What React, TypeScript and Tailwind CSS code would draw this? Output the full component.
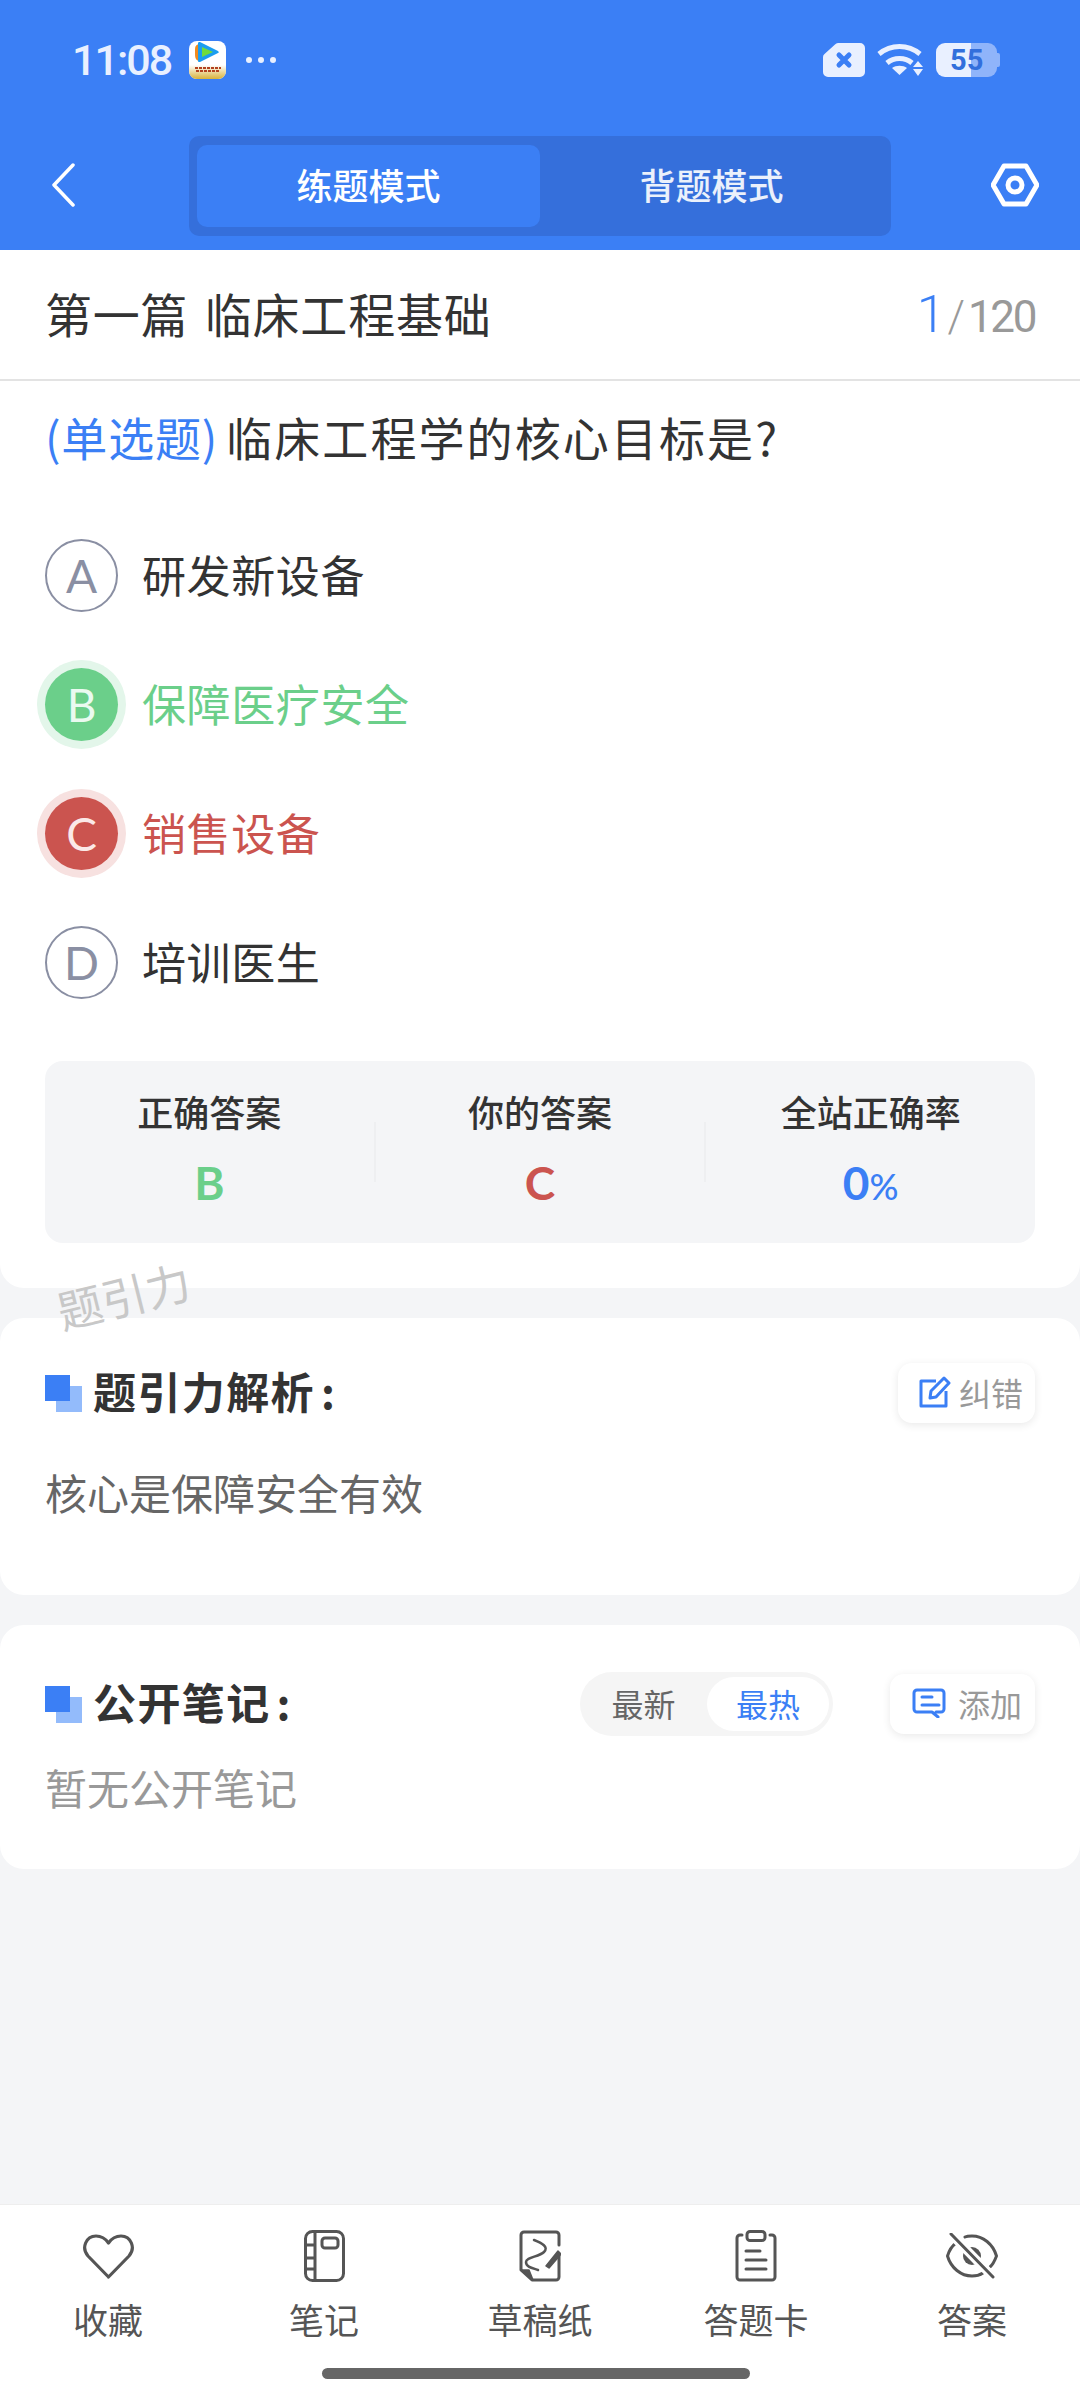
import type { ReactNode } from "react";

const FONT = "font-['Noto_Sans_CJK_SC','Noto_Sans',sans-serif]";

function HexIcon() {
  return (
    <svg width="48" height="44" viewBox="0 0 48 44" fill="none" stroke="white" strokeWidth="5" strokeLinejoin="round">
      <path d="M13 3h22l11 19-11 19H13L2 22z" />
      <circle cx="24" cy="22" r="7" />
    </svg>
  );
}

function AppIcon() {
  return (
    <svg width="37" height="38" viewBox="0 0 37 38" className="rounded-[8px]">
      <defs>
        <linearGradient id="band" x1="0" y1="0" x2="0" y2="1">
          <stop offset="0" stopColor="#ffffff" />
          <stop offset="1" stopColor="#d9b23a" />
        </linearGradient>
      </defs>
      <rect width="37" height="38" fill="white" />
      <rect y="24" width="37" height="14" fill="url(#band)" />
      <path d="M10 3c-4 1-4 3-4 8s0 8 4 9z" fill="#f08a1d" />
      <path d="M9 2c0-1 1-1 2-1l18 9c1 1 1 2 0 2l-18 9c-1 0-2 0-2-1z" fill="#1b9df0" />
      <path d="M13 6l11 5-11 5z" fill="#6fdc3c" />
      <path d="M6 27h26M7 30h24" stroke="#b3421e" strokeWidth="2" strokeDasharray="3 1" />
    </svg>
  );
}

function StatusBar() {
  return (
    <div className="flex h-[118px] items-start justify-between pl-[72px] pr-[80px] pt-[41px]">
      <div className="flex items-center">
        <span className="font-['Roboto',sans-serif] text-[43px] font-medium leading-[38px] tracking-[-2px] text-[#e9f0ff]">11:08</span>
        <div className="ml-[18px] h-[38px] w-[37px]">
          <AppIcon />
        </div>
        <div className="ml-[20px] flex gap-[6px]">
          <span className="h-[6px] w-[6px] rounded-full bg-[#e9f0ff]" />
          <span className="h-[6px] w-[6px] rounded-full bg-[#e9f0ff]" />
          <span className="h-[6px] w-[6px] rounded-full bg-[#e9f0ff]" />
        </div>
      </div>
      <div className="flex h-[38px] items-center gap-[12px]">
        <svg width="42" height="34" viewBox="0 0 42 34">
          <path d="M12 1.5a4 4 0 0 1 3-1.500h22a5 5 0 0 1 5 5v24a5 5 0 0 1-5 5H5a5 5 0 0 1-5-5V14a4 4 0 0 1 1.500-3z" fill="#e9f0ff" />
          <path d="M16 12l10 10M26 12L16 22" stroke="#3b7ff5" strokeWidth="5" strokeLinecap="round" />
        </svg>
        <svg width="47" height="34" viewBox="0 0 47 34" fill="none">
          <path d="M2 11c12-10 29-10 41 0" stroke="#e9f0ff" strokeWidth="5" />
          <path d="M10 20c7-6 18-6 25 0" stroke="#e9f0ff" strokeWidth="5" />
          <path d="M15 25c4-3 11-3 15 0l-7.500 7z" fill="#e9f0ff" />
          <path d="M41 18l5 6H36zM36 26h10l-5 7z" fill="#e9f0ff" />
        </svg>
        <div className="relative h-[34px] w-[64px]">
          <div className="absolute inset-y-0 left-0 w-[35px] rounded-l-[9px] bg-[#e9f0ff]" />
          <div className="absolute inset-y-0 left-[35px] w-[26px] rounded-r-[9px] bg-[#8fb4fa]" />
          <div className="absolute right-0 top-[10px] h-[14px] w-[3px] rounded-r-[2px] bg-[#8fb4fa]" />
          <span className="absolute left-[14px] top-0 font-['Roboto',sans-serif] text-[29px] font-bold leading-[34px] text-[#326fdc]">55</span>
        </div>
      </div>
    </div>
  );
}

function ModeBar() {
  return (
    <div className="flex h-[132px] items-start pl-[50px] pt-[18px]">
      <svg width="26" height="44" viewBox="0 0 26 44" fill="none" stroke="white" strokeWidth="3.5" strokeLinecap="round" strokeLinejoin="round" className="mt-[27px]">
        <path d="M23 2L4 22l19 20" />
      </svg>
      <div className={`ml-[113px] flex h-[100px] w-[702px] items-center rounded-[10px] bg-[#356fdb] px-[8px] ${FONT}`}>
        <div className="flex h-[82px] w-[343px] items-center justify-center rounded-[10px] bg-[#3b7ff5] pb-[4px] text-[36px] font-medium text-white">练题模式</div>
        <div className="flex h-[82px] flex-1 items-center justify-center pb-[4px] text-[36px] font-medium text-white/90">背题模式</div>
      </div>
      <div className="ml-[100px] mt-[27px]">
        <HexIcon />
      </div>
    </div>
  );
}

function OptionRow({ letter, text, state }: { letter: string; text: string; state?: "right" | "wrong" }) {
  const circle =
    state === "right"
      ? "bg-[#6bcf8a] text-[#eafaf0] shadow-[0_0_0_8px_#e3f6ea] border-0"
      : state === "wrong"
        ? "bg-[#cb544f] text-[#fbe9e8] shadow-[0_0_0_8px_#f7e1e0] border-0"
        : "border-2 border-[#8a8fa3] text-[#8a8fa3] bg-white";
  const label = state === "right" ? "text-[#6bcf8a]" : state === "wrong" ? "text-[#cb544f]" : "text-[#333333]";
  return (
    <div className="flex h-[129px] items-center">
      <div className={`flex h-[73px] w-[73px] items-center justify-center rounded-full font-['Lato',sans-serif] text-[46px] ${circle}`}>{letter}</div>
      <span className={`ml-[24px] pb-[3px] text-[44px] tracking-[0.6px] ${label}`}>{text}</span>
    </div>
  );
}

function Stat({ title, children }: { title: string; children: ReactNode }) {
  return (
    <div className="flex flex-1 flex-col items-center">
      <span className="text-[36px] font-medium leading-[50px] text-[#333333]">{title}</span>
      <div className="mt-[19px] h-[56px] font-['Lato',sans-serif] text-[46px] font-bold leading-[56px]">{children}</div>
    </div>
  );
}

function SectionTitle({ text }: { text: string }) {
  return (
    <div className="flex items-center">
      <div className="relative h-[37px] w-[37px] shrink-0">
        <div className="absolute bottom-0 right-0 h-[26px] w-[26px] bg-[#93bbfb]" />
        <div className="absolute left-0 top-0 h-[26px] w-[25px] bg-[#3b7ff5]" />
      </div>
      <span className="ml-[11px] -translate-y-[3px] text-[43px] font-bold leading-[60px] tracking-[1.4px] text-[#333333]">
        {text}
        <span className="ml-[6px]">:</span>
      </span>
    </div>
  );
}

function NavItem({ label, children }: { label: string; children: ReactNode }) {
  return (
    <div className="flex w-[216px] flex-col items-center">
      <div className="flex h-[56px] items-center justify-center">{children}</div>
      <span className="mt-[10px] text-[35px] leading-[50px] text-[#555555]">{label}</span>
    </div>
  );
}

export default function App() {
  return (
    <div className={`flex h-[2400px] w-[1080px] flex-col overflow-hidden bg-[#f4f5f7] ${FONT}`}>
      <div className="bg-[#3b7ff5]">
        <StatusBar />
        <ModeBar />
      </div>

      <div className="rounded-b-[24px] bg-white pb-[45px]">
        <div className="flex h-[131px] items-center justify-between border-b-2 border-[#e3e3e3] pl-[45px] pr-[45px]">
          <span className="pb-[3px] text-[47px] leading-[60px] tracking-[0.8px] text-[#333333] [word-spacing:5px]">第一篇 临床工程基础</span>
          <div className="flex items-baseline font-['Roboto',sans-serif] text-[#999999]">
            <span className="text-[52px] font-light text-[#3b7ff5]">1</span>
            <span className="ml-[2px] text-[44px] font-light">/</span>
            <span className="ml-[3px] text-[44px] tracking-[-2.4px]">120</span>
          </div>
        </div>

        <div className="px-[45px]">
          <p className="flex pt-[23px] text-[46px] leading-[64px] text-[#333333]">
            <span className="tracking-[0.8px] text-[#3b7ff5]">(单选题)</span>
            <span className="ml-[8px] tracking-[2.1px]">临床工程学的核心目标是?</span>
          </p>
          <div className="mt-[43px]">
            <OptionRow letter="A" text="研发新设备" />
            <OptionRow letter="B" text="保障医疗安全" state="right" />
            <OptionRow letter="C" text="销售设备" state="wrong" />
            <OptionRow letter="D" text="培训医生" />
          </div>

          <div className="mt-[34px] flex h-[182px] items-start rounded-[18px] bg-[#f4f5f7] pt-[25px]">
            <Stat title="正确答案"><span className="text-[#6bcf8a]">B</span></Stat>
            <div className="mt-[36px] h-[60px] w-[2px] bg-[#eeeff1]" />
            <Stat title="你的答案"><span className="text-[#cb544f]">C</span></Stat>
            <div className="mt-[36px] h-[60px] w-[2px] bg-[#eeeff1]" />
            <Stat title="全站正确率">
              <span className="text-[#3b7ff5]">0<span className="text-[36px] font-medium">%</span></span>
            </Stat>
          </div>
        </div>
      </div>

      <div className="relative mt-[30px] h-[277px] rounded-[24px] bg-white px-[45px] pt-[45px]">
        <span className="absolute -top-[53px] left-[56px] -rotate-[14deg] text-[45px] leading-[60px] text-[#c8c8c8]">题引力</span>
        <div className="flex items-center justify-between">
          <SectionTitle text="题引力解析" />
          <div className="flex h-[60px] w-[137px] items-center gap-[8px] rounded-[14px] bg-white pb-[2px] pl-[21px] shadow-[0_2px_8px_rgba(0,0,0,0.09)]">
            <svg width="32" height="32" viewBox="0 0 32 32" fill="none" stroke="#3b7ff5" strokeWidth="3" strokeLinejoin="round">
              <path d="M17 5H2v25h25V15" />
              <path d="M11 22l1-7L25 2l5 5-13 14z" />
            </svg>
            <span className="text-[32px] text-[#999999]">纠错</span>
          </div>
        </div>
        <p className="mt-[39px] text-[42px] leading-[60px] text-[#666666]">核心是保障安全有效</p>
      </div>

      <div className="mt-[30px] h-[244px] rounded-[24px] bg-white px-[45px] pt-[47px]">
        <div className="flex items-center">
          <SectionTitle text="公开笔记" />
          <div className="ml-auto flex h-[64px] w-[253px] items-center rounded-full bg-[#f5f5f5]">
            <span className="w-[127px] pb-[3px] text-center text-[32px] text-[#666666]">最新</span>
            <span className="flex h-[54px] w-[122px] items-center justify-center rounded-full bg-white pb-[3px] text-[32px] text-[#3b7ff5]">最热</span>
          </div>
          <div className="ml-[57px] flex h-[60px] w-[145px] items-center gap-[12px] rounded-[14px] bg-white pb-[2px] pl-[22px] shadow-[0_2px_8px_rgba(0,0,0,0.09)]">
            <svg width="34" height="30" viewBox="0 0 34 30" fill="none" stroke="#3b7ff5" strokeWidth="3" strokeLinecap="round" strokeLinejoin="round">
              <path d="M20 24H5a3 3 0 0 1-3-3V5a3 3 0 0 1 3-3h24a3 3 0 0 1 3 3v16a3 3 0 0 1-3 3h-5M20 24l6 5" />
              <path d="M10 9h10M10 17h17" />
            </svg>
            <span className="text-[32px] text-[#999999]">添加</span>
          </div>
        </div>
        <p className="mt-[21px] text-[42px] leading-[60px] text-[#999999]">暂无公开笔记</p>
      </div>

      <div className="mt-auto h-[196px] border-t border-[#eeeeee] bg-white">
        <div className="flex pt-[23px]">
          <NavItem label="收藏">
            <svg width="51" height="45" viewBox="0 0 51 45" fill="none" stroke="#555555" strokeWidth="3.2" strokeLinejoin="round">
              <path d="M25.500 43L5 22C-2 14 3 2 13 2c5 0 9 2 12.500 7C29 4 33 2 38 2c10 0 15 12 8 20z" />
            </svg>
          </NavItem>
          <NavItem label="笔记">
            <svg width="41" height="52" viewBox="0 0 41 52" fill="none" stroke="#555555" strokeWidth="3">
              <rect x="1.500" y="1.500" width="38" height="49" rx="7" />
              <path d="M11 2v48M2 15h9M2 28h9M2 39h9" />
              <rect x="18" y="8" width="16" height="10" rx="3" />
            </svg>
          </NavItem>
          <NavItem label="草稿纸">
            <svg width="42" height="52" viewBox="0 0 42 52" fill="none" stroke="#555555" strokeWidth="3" strokeLinecap="round" strokeLinejoin="round">
              <path d="M40 15V5a3 3 0 0 0-3-3H5a3 3 0 0 0-3 3v35l11 10h24a3 3 0 0 0 3-3V26" />
              <path d="M2 40h8l4 10z" fill="#555555" strokeWidth="1.500" />
              <path d="M15 10c8 3 15 7 10 12S7 27 7 32s6 6 12 8" strokeWidth="2.500" />
              <path d="M27 36l12-15 3 3-12 14z" fill="#555555" strokeWidth="1.500" />
            </svg>
          </NavItem>
          <NavItem label="答题卡">
            <svg width="42" height="52" viewBox="0 0 42 52" fill="none" stroke="#555555" strokeWidth="3" strokeLinecap="round" strokeLinejoin="round">
              <path d="M7 5H5a3 3 0 0 0-3 3v39a3 3 0 0 0 3 3h32a3 3 0 0 0 3-3V8a3 3 0 0 0-3-3h-2" />
              <rect x="12" y="1.500" width="18" height="9" rx="3" />
              <path d="M11 21h14M11 30h20M11 39h20" />
            </svg>
          </NavItem>
          <NavItem label="答案">
            <svg width="52" height="46" viewBox="0 0 52 46" fill="none" stroke="#555555" strokeWidth="3" strokeLinecap="round" strokeLinejoin="round">
              <path d="M10 10C6 13 3 18 1.500 23 5 35 15 43 26 43c4 0 8-1 11-3M19 4c2-1 5-1 7-1 11 0 21 8 24.500 20-1.500 4-3 8-6.500 11" />
              <circle cx="26" cy="23" r="9" fill="#555555" stroke="none" />
              <path d="M5 1l42 43" stroke="white" strokeWidth="9" />
              <path d="M5 1l42 43" />
            </svg>
          </NavItem>
        </div>
        <div className="mx-auto mt-[24px] h-[11px] w-[428px] -translate-x-[4px] rounded-full bg-[#666666]" />
      </div>
    </div>
  );
}
